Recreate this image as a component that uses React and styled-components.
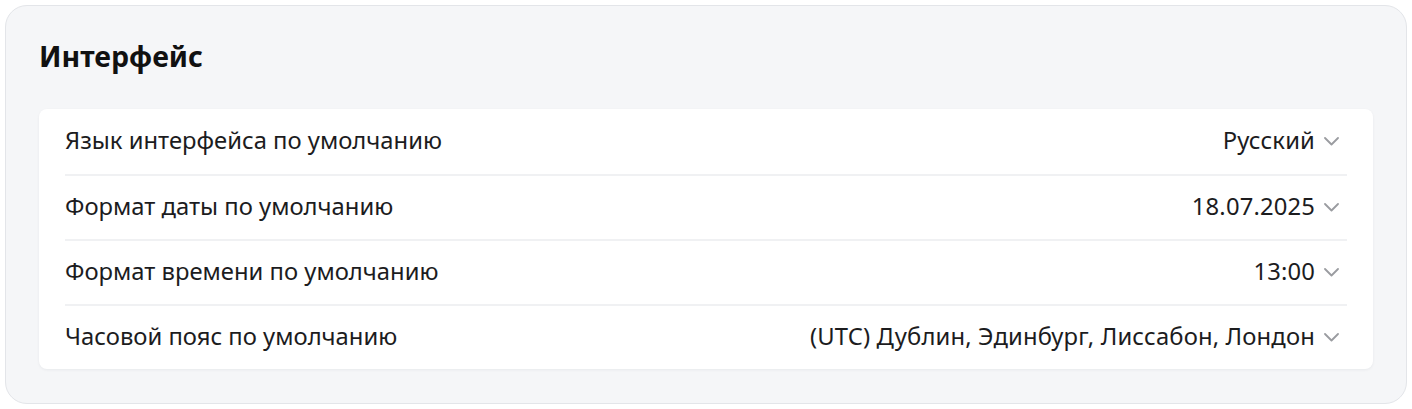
import React from 'react'
import styled, { createGlobalStyle } from 'styled-components'

const GlobalStyle = createGlobalStyle`
  body {
    margin: 0;
    background: #ffffff;
    font-family: "Noto Sans", "Open Sans", sans-serif;
    color: #1c1c1e;
  }
`

const Panel = styled.section`
  margin: 5px 5px;
  height: 399px;
  box-sizing: border-box;
  background: #f5f6f8;
  border: 1px solid #e3e5e9;
  border-radius: 22px;
  padding: 29px 33px 0 33px;
`

const Title = styled.h2`
  margin: 0;
  font-size: 28.5px;
  font-weight: 700;
  line-height: 42px;
  color: #111;
`

const Card = styled.div`
  margin-top: 32px;
  background: #fff;
  border-radius: 8px;
  box-shadow: 0 1px 3px rgba(20, 30, 50, 0.06);
  padding: 0 26px;
`

const Row = styled.div`
  display: flex;
  align-items: center;
  justify-content: space-between;
  height: 65px;
  box-sizing: border-box;
  padding-bottom: 3px;
  border-top: ${p => (p.$first ? 'none' : '2px solid #f0f1f3')};
  font-size: 23.8px;
  font-weight: 400;
`

const Label = styled.span`
  color: #1c1c1e;
`

const Select = styled.div`
  display: flex;
  align-items: center;
  gap: 9px;
  margin-right: 8px;
  color: #1c1c1e;
  cursor: pointer;
  letter-spacing: 0.15px;

  svg {
    margin-top: 3px;
  }
`

const Chevron = () => (
  <svg width="15" height="9" viewBox="0 0 15 9" fill="none">
    <path d="M1 1l6.5 6.5L14 1" stroke="#9a9ca0" strokeWidth="1.8" strokeLinecap="round" strokeLinejoin="round" />
  </svg>
)

const rows = [
  { label: 'Язык интерфейса по умолчанию', value: 'Русский' },
  { label: 'Формат даты по умолчанию', value: '18.07.2025' },
  { label: 'Формат времени по умолчанию', value: '13:00' },
  { label: 'Часовой пояс по умолчанию', value: '(UTC) Дублин, Эдинбург, Лиссабон, Лондон' },
]

export default function App() {
  return (
    <>
      <GlobalStyle />
      <Panel>
        <Title>Интерфейс</Title>
        <Card>
          {rows.map((r, i) => (
            <Row key={r.label} $first={i === 0}>
              <Label>{r.label}</Label>
              <Select>
                {r.value}
                <Chevron />
              </Select>
            </Row>
          ))}
        </Card>
      </Panel>
    </>
  )
}
